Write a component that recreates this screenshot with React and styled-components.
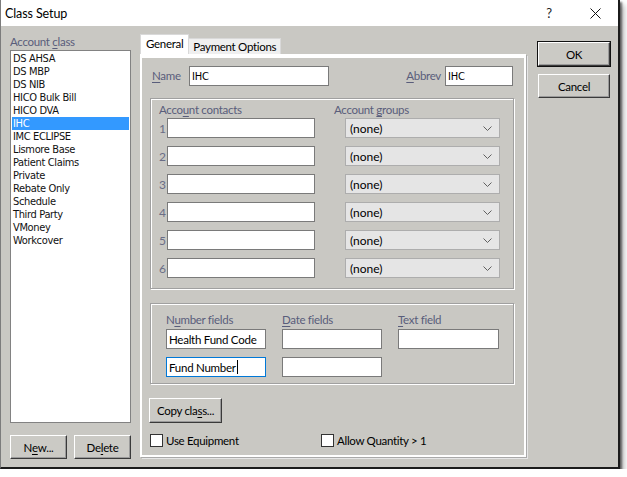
import styled, { createGlobalStyle } from "styled-components";

const GlobalStyle = createGlobalStyle`
  html, body {
    margin: 0;
    padding: 0;
    background: #ffffff;
  }
  * {
    box-sizing: border-box;
  }
`;

const ui = `Lato, "Noto Sans", sans-serif`;
const classic = `"DejaVu Sans Condensed", "DejaVu Sans", sans-serif`;

const Window = styled.div`
  width: 620px;
  height: 469px;
  display: flex;
  flex-direction: column;
  background: #c9c8c3;
  border-left: 1px solid #7c7c7c;
  border-right: 2px solid #1b1b1b;
  border-bottom: 2px solid #1b1b1b;
  box-shadow: 2px 2px 2px rgba(0, 0, 0, 0.55), 5px 5px 5px rgba(0, 0, 0, 0.22);
  font-family: ${ui};
  font-size: 11.5px;
  letter-spacing: -0.3px;
  color: #000;
`;

const TitleBar = styled.div`
  height: 26px;
  flex-shrink: 0;
  display: flex;
  align-items: center;
  background: #ffffff;
  padding-left: 4px;
  font-size: 12.5px;
  letter-spacing: -0.1px;
`;

const TitleButton = styled.div`
  width: 46px;
  height: 26px;
  display: flex;
  align-items: center;
  justify-content: center;
  font-size: 13px;
  color: #222;
  margin-left: ${(p) => (p.$first ? "auto" : "0")};
`;

const Body = styled.div`
  flex: 1;
  display: flex;
  padding: 8px 0 0 9px;
`;

const LeftCol = styled.div`
  width: 121px;
  display: flex;
  flex-direction: column;
`;

const Label = styled.div`
  color: #595d7b;
  line-height: ${(p) => p.$lh || 16}px;
  white-space: nowrap;
  width: ${(p) => (p.$w ? p.$w + "px" : "auto")};
`;

const Key = styled.span`
  text-decoration: underline;
  text-underline-offset: 2px;
`;

const ListBox = styled.div`
  height: 373px;
  background: #fff;
  border: 1px solid #828282;
  padding: 1px 1px;
  font-family: ${classic};
  font-size: 11px;
  letter-spacing: -0.35px;
`;

const ListItem = styled.div`
  height: 13px;
  line-height: 13px;
  padding-left: 1px;
  color: ${(p) => (p.$selected ? "#fff" : "#111")};
  background: ${(p) => (p.$selected ? "#3399ff" : "transparent")};
`;

const ButtonRow = styled.div`
  display: flex;
  gap: 7px;
  margin-top: 12px;
`;

const Button = styled.div`
  width: ${(p) => p.$w}px;
  height: ${(p) => p.$h || 24}px;
  display: flex;
  align-items: center;
  justify-content: center;
  background: #cbcac5;
  border-top: 1px solid #fff;
  border-left: 1px solid #fff;
  border-right: 1px solid #3a3a3a;
  border-bottom: 1px solid #3a3a3a;
  box-shadow: inset -1px -1px 0 #9a9a9a;
  outline: ${(p) => (p.$default ? "1px solid #111" : "none")};
  white-space: nowrap;
`;

const CopyWrap = styled.div`
  margin-top: 14px;
  margin-left: -1px;
`;

const TabCol = styled.div`
  width: 388px;
  margin-left: 9px;
  display: flex;
  flex-direction: column;
`;

const TabStrip = styled.div`
  height: 20px;
  display: flex;
  align-items: flex-end;
`;

const Tab = styled.div`
  height: ${(p) => (p.$active ? 20 : 16)}px;
  padding: 0 ${(p) => (p.$active ? 5 : 4)}px;
  padding-bottom: ${(p) => (p.$active ? 3 : 0)}px;
  display: flex;
  align-items: center;
  background: ${(p) => (p.$active ? "#ffffff" : "#efefef")};
  border: 1px solid #d9d9d9;
  border-bottom: none;
  border-left: ${(p) => (p.$active ? "1px solid #d9d9d9" : "none")};
`;

const Panel = styled.div`
  width: 386px;
  height: 403px;
  border: 2px solid #ffffff;
  border-top-width: 4px;
  box-shadow: 1px 1px 0 #a9a9a9, 2px 2px 0 #e6e6e6;
  padding: 8px 10px 0 8px;
  display: flex;
  flex-direction: column;
`;

const NameRow = styled.div`
  height: 20px;
  display: flex;
  align-items: center;
  padding-left: 2px;
  padding-right: 1px;
`;

const Field = styled.div`
  width: ${(p) => p.$w}px;
  height: 20px;
  background: #fff;
  border: 1px solid ${(p) => (p.$focus ? "#0078d7" : "#7a7a7a")};
  padding-left: 2px;
  display: flex;
  align-items: center;
  font-family: ${(p) => (p.$ui ? ui : classic)};
  font-size: ${(p) => (p.$ui ? "11.5px" : "11px")};
  letter-spacing: ${(p) => (p.$ui ? "-0.25px" : "-0.2px")};
  white-space: nowrap;
`;

const Caret = styled.span`
  display: inline-block;
  width: 1px;
  height: 14px;
  background: #000;
  margin-left: 1px;
`;

const Abbrev = styled.div`
  margin-left: auto;
  display: flex;
  align-items: center;
  gap: 4px;
`;

const GroupBox = styled.div`
  width: 364px;
  height: ${(p) => p.$h}px;
  margin-top: ${(p) => p.$mt}px;
  border: 1px solid #a0a0a0;
  box-shadow: inset 1px 1px 0 #fff, 1px 1px 0 #fff;
  padding: ${(p) => p.$pad};
  display: flex;
  flex-direction: column;
`;

const HeaderRow = styled.div`
  display: flex;
  height: 14px;
  align-items: center;
`;

const ContactRow = styled.div`
  display: flex;
  align-items: center;
  height: 20px;
  margin-top: ${(p) => (p.$first ? 1 : 8)}px;
`;

const RowNum = styled.div`
  width: 8px;
  color: #6a6d86;
  font-size: 12px;
`;

const Select = styled.div`
  width: 155px;
  height: 20px;
  margin-left: 30px;
  background: #e5e5e5;
  border: 1px solid #adadad;
  display: flex;
  align-items: center;
  justify-content: space-between;
  padding: 0 7px 0 4px;
  font-size: 12px;
  letter-spacing: 0;
`;

const FieldGrid = styled.div`
  display: grid;
  grid-template-columns: 100px 100px 101px;
  column-gap: 16px;
  row-gap: 8px;
  margin-top: 2px;
`;

const CheckRow = styled.div`
  display: flex;
  margin-top: 11px;
`;

const Check = styled.div`
  display: flex;
  align-items: center;
  gap: 3px;
  width: ${(p) => (p.$w ? p.$w + "px" : "auto")};
  height: 13px;
`;

const Box = styled.span`
  width: 13px;
  height: 13px;
  background: #fff;
  border: 1px solid #333;
`;

const RightCol = styled.div`
  width: 72px;
  margin-left: 10px;
  padding-top: 8px;
  display: flex;
  flex-direction: column;
  gap: 8px;
`;

const Chevron = () => (
  <svg width="9" height="5" viewBox="0 0 9 5">
    <path d="M0.5 0.5 L4.5 4.5 L8.5 0.5" fill="none" stroke="#606060" strokeWidth="1" />
  </svg>
);

const CloseIcon = () => (
  <svg width="11" height="11" viewBox="0 0 11 11">
    <path d="M0.5 0.5 L10.5 10.5 M10.5 0.5 L0.5 10.5" stroke="#111" strokeWidth="1" />
  </svg>
);

const classes = [
  "DS AHSA",
  "DS MBP",
  "DS NIB",
  "HICO Bulk Bill",
  "HICO DVA",
  "IHC",
  "IMC ECLIPSE",
  "Lismore Base",
  "Patient Claims",
  "Private",
  "Rebate Only",
  "Schedule",
  "Third Party",
  "VMoney",
  "Workcover",
];

export default function App() {
  return (
    <>
      <GlobalStyle />
      <Window>
        <TitleBar>
          Class Setup
          <TitleButton $first>?</TitleButton>
          <TitleButton>
            <CloseIcon />
          </TitleButton>
        </TitleBar>
        <Body>
          <LeftCol>
            <Label>
              Account <Key>c</Key>lass
            </Label>
            <ListBox>
              {classes.map((c) => (
                <ListItem key={c} $selected={c === "IHC"}>
                  {c}
                </ListItem>
              ))}
            </ListBox>
            <ButtonRow>
              <Button $w={57}>
                N<Key>e</Key>w...
              </Button>
              <Button $w={57}>
                De<Key>l</Key>ete
              </Button>
            </ButtonRow>
          </LeftCol>

          <TabCol>
            <TabStrip>
              <Tab $active>General</Tab>
              <Tab>Payment Options</Tab>
            </TabStrip>
            <Panel>
              <NameRow>
                <Label $w={37}>
                  <Key>N</Key>ame
                </Label>
                <Field $w={140}>IHC</Field>
                <Abbrev>
                  <Label>
                    <Key>A</Key>bbrev
                  </Label>
                  <Field $w={68}>IHC</Field>
                </Abbrev>
              </NameRow>

              <GroupBox $h={191} $mt={12} $pad="4px 0 0 8px">
                <HeaderRow>
                  <Label $w={175} $lh={14}>
                    Acco<Key>u</Key>nt contacts
                  </Label>
                  <Label $lh={14}>
                    Account <Key>g</Key>roups
                  </Label>
                </HeaderRow>
                {[1, 2, 3, 4, 5, 6].map((n) => (
                  <ContactRow key={n} $first={n === 1}>
                    <RowNum>{n}</RowNum>
                    <Field $w={148} />
                    <Select>
                      (none)
                      <Chevron />
                    </Select>
                  </ContactRow>
                ))}
              </GroupBox>

              <GroupBox $h={81} $mt={14} $pad="7px 0 0 15px">
                <FieldGrid>
                  <Label $lh={14}>
                    N<Key>u</Key>mber fields
                  </Label>
                  <Label $lh={14}>
                    <Key>D</Key>ate fields
                  </Label>
                  <Label $lh={14}>
                    <Key>T</Key>ext field
                  </Label>
                </FieldGrid>
                <FieldGrid>
                  <Field $w={100} $ui>
                    Health Fund Code
                  </Field>
                  <Field $w={100} />
                  <Field $w={101} />
                  <Field $w={100} $ui $focus>
                    Fund Number
                    <Caret />
                  </Field>
                  <Field $w={100} />
                </FieldGrid>
              </GroupBox>

              <CopyWrap>
                <Button $w={73} $h={25}>
                  Copy cla<Key>s</Key>s...
                </Button>
              </CopyWrap>

              <CheckRow>
                <Check $w={171}>
                  <Box />
                  Use Equipment
                </Check>
                <Check>
                  <Box />
                  Allow Quantity &gt; 1
                </Check>
              </CheckRow>
            </Panel>
          </TabCol>

          <RightCol>
            <Button $w={72} $default>
              OK
            </Button>
            <Button $w={72}>Cancel</Button>
          </RightCol>
        </Body>
      </Window>
    </>
  );
}
